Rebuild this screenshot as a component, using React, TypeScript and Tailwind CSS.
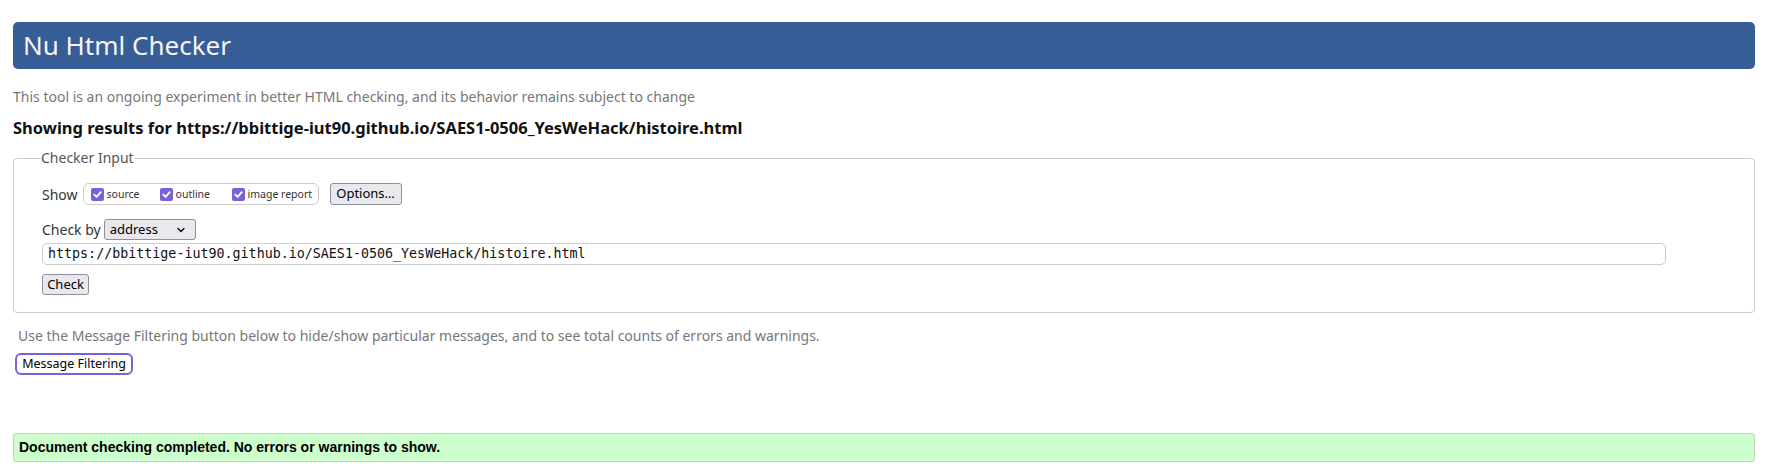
import { ChevronDown } from 'lucide-react'

const Tick = () => (
    <span className="flex h-[13px] w-[13px] shrink-0 items-center justify-center rounded-[2px] bg-[#7b61d9]">
        <svg viewBox="0 0 12 12" className="h-[11px] w-[11px]" fill="none" stroke="white" strokeWidth="2" strokeLinecap="round" strokeLinejoin="round">
            <path d="M2.5 6.2 5 8.6 9.6 3.4" />
        </svg>
    </span>
)

const ShowOption = ({ label, className }: { label: string; className?: string }) => (
    <label className={`flex items-center gap-[3px] whitespace-nowrap ${className ?? ''}`}>
        <Tick />
        <span className="mt-[1px] text-[10.5px] text-[#333]">{label}</span>
    </label>
)

const Btn = ({ children, className }: { children: React.ReactNode; className?: string }) => (
    <button className={`flex h-[21px] items-center whitespace-nowrap rounded-[3px] border border-[#8f8f9d] bg-[#e9e9ed] px-[5px] text-[13px] text-black ${className ?? ''}`}>
        {children}
    </button>
)

export default function App() {
    const url = 'https://bbittige-iut90.github.io/SAES1-0506_YesWeHack/histoire.html'

    return (
        <div className="min-h-[474px] bg-white pl-[13px] pr-[12px] pt-[22px] font-['Noto_Sans',sans-serif]">
            <h1 className="h-[47px] rounded-[5px] bg-[#365d95] px-[10px] text-[26px] leading-[47px] text-[#f4f4f4]">
                Nu Html Checker
            </h1>

            <p className="mt-[18px] text-[14px] leading-[20px] text-[#777]">
                This tool is an ongoing experiment in better HTML checking, and its behavior remains subject to change
            </p>
            <p className="mt-[10px] text-[16.5px] font-bold leading-[22px] text-[#111]">
                Showing results for {url}
            </p>

            <fieldset className="mt-[9px] rounded-[4px] border border-[#ccc] px-[28px] pb-[17px]">
                <legend className="ml-[-1px] text-[14px] leading-[20px] text-[#555]">Checker Input</legend>

                <div className="mt-[15px] flex h-[22px] items-center">
                    <span className="mr-[5px] text-[14px] text-[#333]">Show</span>
                    <div className="flex h-[22px] w-[236px] items-center rounded-[6px] border border-[#ccc] pl-[7px]">
                        <ShowOption label="source" className="w-[69px]" />
                        <ShowOption label="outline" className="w-[72px]" />
                        <ShowOption label="image report" />
                    </div>
                    <Btn className="ml-[11px] h-[22px] w-[72px] justify-center text-[13.5px]">Options…</Btn>
                </div>

                <div className="mt-[14px] flex h-[21px] items-center">
                    <span className="mr-[3px] text-[14px] text-[#333]">Check by</span>
                    <div className="flex h-[21px] w-[92px] items-center justify-between rounded-[3px] border border-[#8f8f9d] bg-[#e9e9ed] pl-[5px] pr-[8px] text-[13px] text-black">
                        <span>address</span>
                        <ChevronDown className="h-[12px] w-[12px]" strokeWidth={2.5} />
                    </div>
                </div>

                <div className="mt-[3px] flex h-[22px] w-[1624px] items-center rounded-[5px] border border-[#ccc] px-[5px] font-['DejaVu_Sans_Mono',monospace] text-[13.33px] text-[#111]">
                    {url}
                </div>

                <Btn className="mt-[9px] w-[47px] justify-center">Check</Btn>
            </fieldset>

            <p className="mt-[13px] pl-[5px] text-[14px] leading-[20px] text-[#777]">
                Use the Message Filtering button below to hide/show particular messages, and to see total counts of errors and warnings.
            </p>
            <button className="ml-[2px] mt-[7px] flex h-[22px] w-[118px] items-center justify-center whitespace-nowrap rounded-[6px] border-2 border-[#7b61d9] bg-white text-[12.5px] text-black">
                Message Filtering
            </button>

            <div className="mt-[58px] flex h-[29px] items-center rounded-[3px] border border-[#ccc] bg-[#ccffcc] pl-[5px] font-['Liberation_Sans',sans-serif] text-[14px] font-bold text-black">
                Document checking completed. No errors or warnings to show.
            </div>
        </div>
    )
}
